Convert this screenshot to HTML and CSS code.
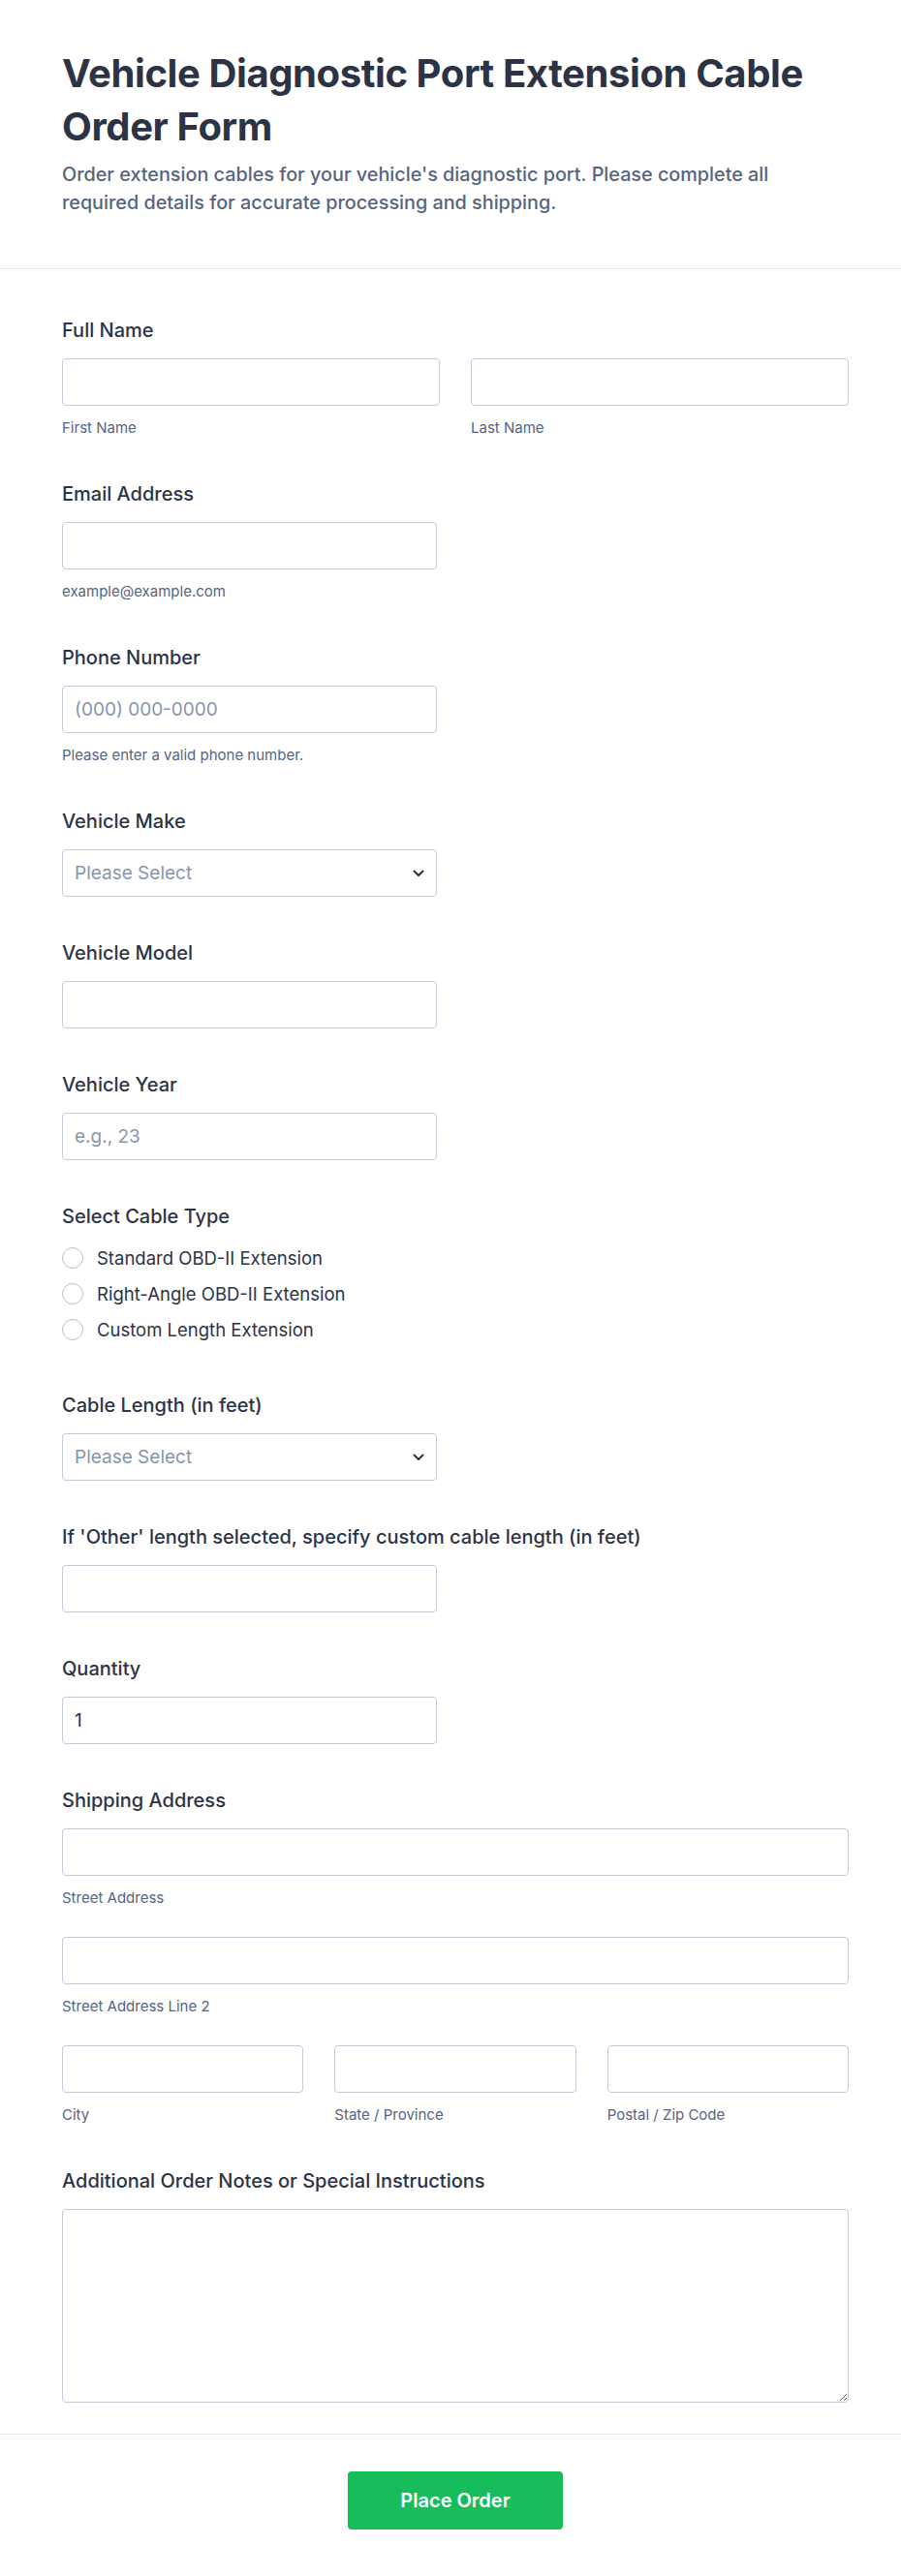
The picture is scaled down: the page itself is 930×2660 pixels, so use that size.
FILE: index.html
```html
<!DOCTYPE html>
<html lang="en">
<head>
<meta charset="utf-8">
<title>Vehicle Diagnostic Port Extension Cable Order Form</title>
<link rel="stylesheet" href="styles.css">
</head>
<body>
<div class="page">
  <header class="header">
    <h1 class="title">Vehicle Diagnostic Port Extension Cable Order Form</h1>
    <p class="desc">Order extension cables for your vehicle's diagnostic port. Please complete all required details for accurate processing and shipping.</p>
  </header>

  <form class="form-body">
    <div class="field">
      <label class="lbl">Full Name</label>
      <div class="row2">
        <div>
          <input class="input" type="text">
          <div class="sub">First Name</div>
        </div>
        <div>
          <input class="input" type="text">
          <div class="sub">Last Name</div>
        </div>
      </div>
    </div>

    <div class="field">
      <label class="lbl">Email Address</label>
      <input class="input half" type="email">
      <div class="sub">example@example.com</div>
    </div>

    <div class="field">
      <label class="lbl">Phone Number</label>
      <input class="input half" type="tel" placeholder="(000) 000-0000">
      <div class="sub">Please enter a valid phone number.</div>
    </div>

    <div class="field">
      <label class="lbl">Vehicle Make</label>
      <div class="select-wrap half">
        <select class="input select">
          <option>Please Select</option>
        </select>
        <svg class="chev" width="12" height="8" viewBox="0 0 12 8"><path d="M1.5 1.5 L6 6 L10.5 1.5" fill="none" stroke="#2c3345" stroke-width="2" stroke-linecap="round" stroke-linejoin="round"/></svg>
      </div>
    </div>

    <div class="field">
      <label class="lbl">Vehicle Model</label>
      <input class="input half" type="text">
    </div>

    <div class="field">
      <label class="lbl">Vehicle Year</label>
      <input class="input half" type="text" placeholder="e.g., 23">
    </div>

    <div class="field">
      <label class="lbl">Select Cable Type</label>
      <div class="radios">
        <label class="radio-row"><input class="radio" type="radio" name="ct"><span>Standard OBD-II Extension</span></label>
        <label class="radio-row"><input class="radio" type="radio" name="ct"><span>Right-Angle OBD-II Extension</span></label>
        <label class="radio-row"><input class="radio" type="radio" name="ct"><span>Custom Length Extension</span></label>
      </div>
    </div>

    <div class="field">
      <label class="lbl">Cable Length (in feet)</label>
      <div class="select-wrap half">
        <select class="input select">
          <option>Please Select</option>
        </select>
        <svg class="chev" width="12" height="8" viewBox="0 0 12 8"><path d="M1.5 1.5 L6 6 L10.5 1.5" fill="none" stroke="#2c3345" stroke-width="2" stroke-linecap="round" stroke-linejoin="round"/></svg>
      </div>
    </div>

    <div class="field">
      <label class="lbl">If 'Other' length selected, specify custom cable length (in feet)</label>
      <input class="input half" type="text">
    </div>

    <div class="field">
      <label class="lbl">Quantity</label>
      <input class="input half" type="text" value="1">
    </div>

    <div class="field">
      <label class="lbl">Shipping Address</label>
      <div class="stack">
        <div>
          <input class="input" type="text">
          <div class="sub">Street Address</div>
        </div>
        <div>
          <input class="input" type="text">
          <div class="sub">Street Address Line 2</div>
        </div>
        <div class="row3">
          <div>
            <input class="input" type="text">
            <div class="sub">City</div>
          </div>
          <div>
            <input class="input" type="text">
            <div class="sub">State / Province</div>
          </div>
          <div>
            <input class="input" type="text">
            <div class="sub">Postal / Zip Code</div>
          </div>
        </div>
      </div>
    </div>

    <div class="field">
      <label class="lbl">Additional Order Notes or Special Instructions</label>
      <textarea class="input textarea"></textarea>
    </div>
  </form>

  <div class="footer">
    <button class="submit" type="button">Place Order</button>
  </div>
</div>
</body>
</html>
```

FILE: styles.css
```css
* {
  box-sizing: border-box;
}

html, body {
  margin: 0;
  padding: 0;
  background: #ffffff;
}

body {
  font-family: Inter, "Noto Sans", "Liberation Sans", sans-serif;
  color: #2c3345;
}

.page {
  width: 100%;
}

.header {
  padding: 48px 54px 53px 64px;
  border-bottom: 1px solid #e3e6ee;
}

.title {
  margin: 0;
  font-size: 40px;
  line-height: 55px;
  font-weight: 700;
  letter-spacing: -0.4px;
  color: #2c3345;
}

.desc {
  margin: 8px 0 0;
  max-width: 790px;
  font-size: 19.8px;
  line-height: 29px;
  font-weight: 500;
  color: #57647e;
}

.form-body {
  margin: 0;
  padding: 51px 54px 32px 64px;
  display: flex;
  flex-direction: column;
  gap: 46px;
  border-bottom: 1px solid #e3e6ee;
}

.field {
  display: flex;
  flex-direction: column;
}

.lbl {
  display: block;
  font-size: 20px;
  line-height: 24px;
  font-weight: 500;
  color: #2c3345;
  margin-bottom: 17px;
}

.input {
  display: block;
  width: 100%;
  height: 49px;
  margin: 0;
  padding: 0 12px;
  border: 1px solid #c3cad8;
  border-radius: 4px;
  background: #ffffff;
  font-family: Inter, "Noto Sans", "Liberation Sans", sans-serif;
  font-size: 19px;
  color: #2c3345;
  outline: none;
}

.input::placeholder {
  color: #8894ab;
}

.half {
  width: 387px;
}

.row2 {
  display: grid;
  grid-template-columns: 1fr 1fr;
  column-gap: 32px;
}

.row3 {
  display: grid;
  grid-template-columns: 1fr 1fr 1fr;
  column-gap: 32px;
}

.stack {
  display: flex;
  flex-direction: column;
  gap: 30px;
}

.sub {
  margin-top: 13px;
  font-size: 15px;
  line-height: 20px;
  color: #57647e;
}

.select-wrap {
  position: relative;
}

.select {
  appearance: none;
  -webkit-appearance: none;
  color: #8894ab;
  padding-right: 36px;
}

.chev {
  position: absolute;
  right: 13px;
  top: 21px;
  pointer-events: none;
}

.radios {
  display: flex;
  flex-direction: column;
  gap: 9px;
  padding-bottom: 6px;
}

.radio-row {
  display: flex;
  align-items: center;
  gap: 14px;
  height: 28px;
  font-size: 18.5px;
  line-height: 28px;
  color: #2c3345;
}

.radio {
  appearance: none;
  -webkit-appearance: none;
  width: 22px;
  height: 22px;
  margin: 0;
  border: 1px solid #b7bfcd;
  border-radius: 50%;
  background: #ffffff;
  flex: none;
}

.textarea {
  height: 200px;
  padding: 12px;
  resize: both;
}

.footer {
  padding: 38px 54px 49px 64px;
  display: flex;
  justify-content: center;
}

.submit {
  width: 222px;
  height: 60px;
  border: none;
  border-radius: 4px;
  background: #18bd5b;
  color: #ffffff;
  font-family: Inter, "Noto Sans", "Liberation Sans", sans-serif;
  font-size: 20px;
  font-weight: 600;
  cursor: pointer;
}
```
